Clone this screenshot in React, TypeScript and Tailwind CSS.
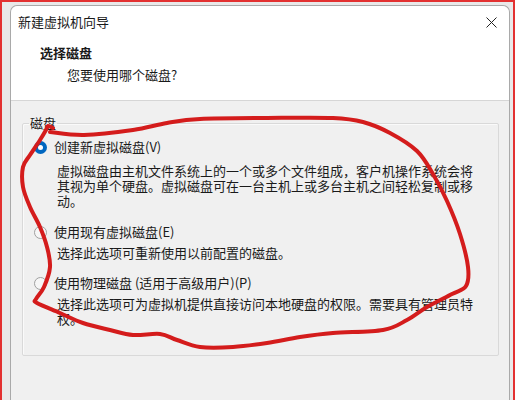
import type { ReactNode } from 'react';

const FONT = { fontFamily: '"Noto Sans CJK SC", "Noto Sans", sans-serif' };

// red marker loop drawn on top of the dialog
const LOOP: [number, number][] = [
  [50, 132], [84, 135], [133, 130], [167, 123], [200, 119], [267, 118], [333, 118],
  [363, 122], [390, 133], [417, 151], [433, 174], [447, 201], [460, 234], [468, 267],
  [466, 286], [452, 294], [427, 307], [407, 320], [383, 330], [333, 333], [300, 337],
  [267, 343], [233, 347], [200, 347], [177, 340], [160, 334], [133, 335], [110, 330],
  [83, 323], [60, 313], [37, 303], [36, 299], [44, 287], [50, 267], [47, 247],
  [40, 227], [30, 207], [23, 187], [23, 167], [30, 155], [40, 140], [46, 130],
  [48, 126], [53, 128],
];

function smoothPath(pts: [number, number][]) {
  let d = `M${pts[0][0]},${pts[0][1]}`;
  for (let i = 0; i < pts.length - 1; i++) {
    const p0 = pts[i - 1] || pts[i];
    const p1 = pts[i];
    const p2 = pts[i + 1];
    const p3 = pts[i + 2] || p2;
    const c1x = p1[0] + (p2[0] - p0[0]) / 6;
    const c1y = p1[1] + (p2[1] - p0[1]) / 6;
    const c2x = p2[0] - (p3[0] - p1[0]) / 6;
    const c2y = p2[1] - (p3[1] - p1[1]) / 6;
    d += ` C${c1x},${c1y} ${c2x},${c2y} ${p2[0]},${p2[1]}`;
  }
  return d;
}

function Radio({ checked }: { checked?: boolean }) {
  return checked ? (
    <span className="flex h-[13px] w-[13px] shrink-0 items-center justify-center rounded-full bg-[#0067c0]">
      <span className="h-[5px] w-[5px] rounded-full bg-white" />
    </span>
  ) : (
    <span className="h-[13px] w-[13px] shrink-0 rounded-full border border-[#a0a0a0] bg-[#f6f6f6]" />
  );
}

function Option({ checked, label, className }: { checked?: boolean; label: string; className?: string }) {
  return (
    <div className={`flex h-[16px] items-center gap-[7px] pl-[11px] ${className ?? ''}`}>
      <Radio checked={checked} />
      <span className="whitespace-nowrap">{label}</span>
    </div>
  );
}

function Desc({ children, className }: { children: ReactNode; className?: string }) {
  return <p className={`whitespace-nowrap pl-[34px] leading-[15px] ${className ?? ''}`}>{children}</p>;
}

export default function App() {
  return (
    <div className="relative h-[400px] w-[515px] overflow-hidden text-[13px] text-[#1a1a1a]" style={FONT}>
      <div className="flex h-full flex-col border-2 border-b-0 border-[#e33131] bg-[#e9e9e9] pl-[8px] pr-[3px] pt-[3px]">
        <div className="flex flex-1 flex-col rounded-t-[7px] border border-b-0 border-[#a9a9a9] bg-[#f0f0f0]">
          <div className="h-[95px] rounded-t-[7px] border-b border-[#d6d6d6] bg-white">
            <div className="flex h-[32px] items-center justify-between pl-[7px] pr-[12px]">
              <span>新建虚拟机向导</span>
              <svg width="11" height="11" viewBox="0 0 11 11" className="mt-[1px]">
                <path d="M0.5 0.5 L10.5 10.5 M10.5 0.5 L0.5 10.5" stroke="#222" strokeWidth="1" />
              </svg>
            </div>
            <div className="mt-[7px] pl-[29px] font-bold leading-[16px]">选择磁盘</div>
            <div className="mt-[6px] pl-[56px] leading-[16px]">您要使用哪个磁盘?</div>
          </div>

          <div className="px-[11px] pt-[14px] pr-[10px]">
            <fieldset className="rounded-[2px] border border-[#d9d9d9] pb-[29px] pt-[8px] shadow-[inset_1px_1px_0_#fafafa]">
              <legend className="ml-[6px] px-[1px] leading-[16px]">磁盘</legend>
              <Option checked label="创建新虚拟磁盘(V)" />
              <Desc className="mt-[8px]">
                虚拟磁盘由主机文件系统上的一个或多个文件组成，客户机操作系统会将
                <br />
                其视为单个硬盘。虚拟磁盘可在一台主机上或多台主机之间轻松复制或移
                <br />
                动。
              </Desc>
              <Option label="使用现有虚拟磁盘(E)" className="mt-[16px]" />
              <Desc className="mt-[5px]">选择此选项可重新使用以前配置的磁盘。</Desc>
              <Option label="使用物理磁盘 (适用于高级用户)(P)" className="mt-[15px]" />
              <Desc className="mt-[5px]">
                选择此选项可为虚拟机提供直接访问本地硬盘的权限。需要具有管理员特
                <br />
                权。
              </Desc>
            </fieldset>
          </div>
        </div>
      </div>

      <svg className="pointer-events-none absolute left-0 top-0" width="515" height="400" viewBox="0 0 515 400">
        <path d={smoothPath(LOOP)} fill="none" stroke="#d41c1c" strokeWidth="4" strokeLinecap="round" strokeLinejoin="round" />
      </svg>
    </div>
  );
}
